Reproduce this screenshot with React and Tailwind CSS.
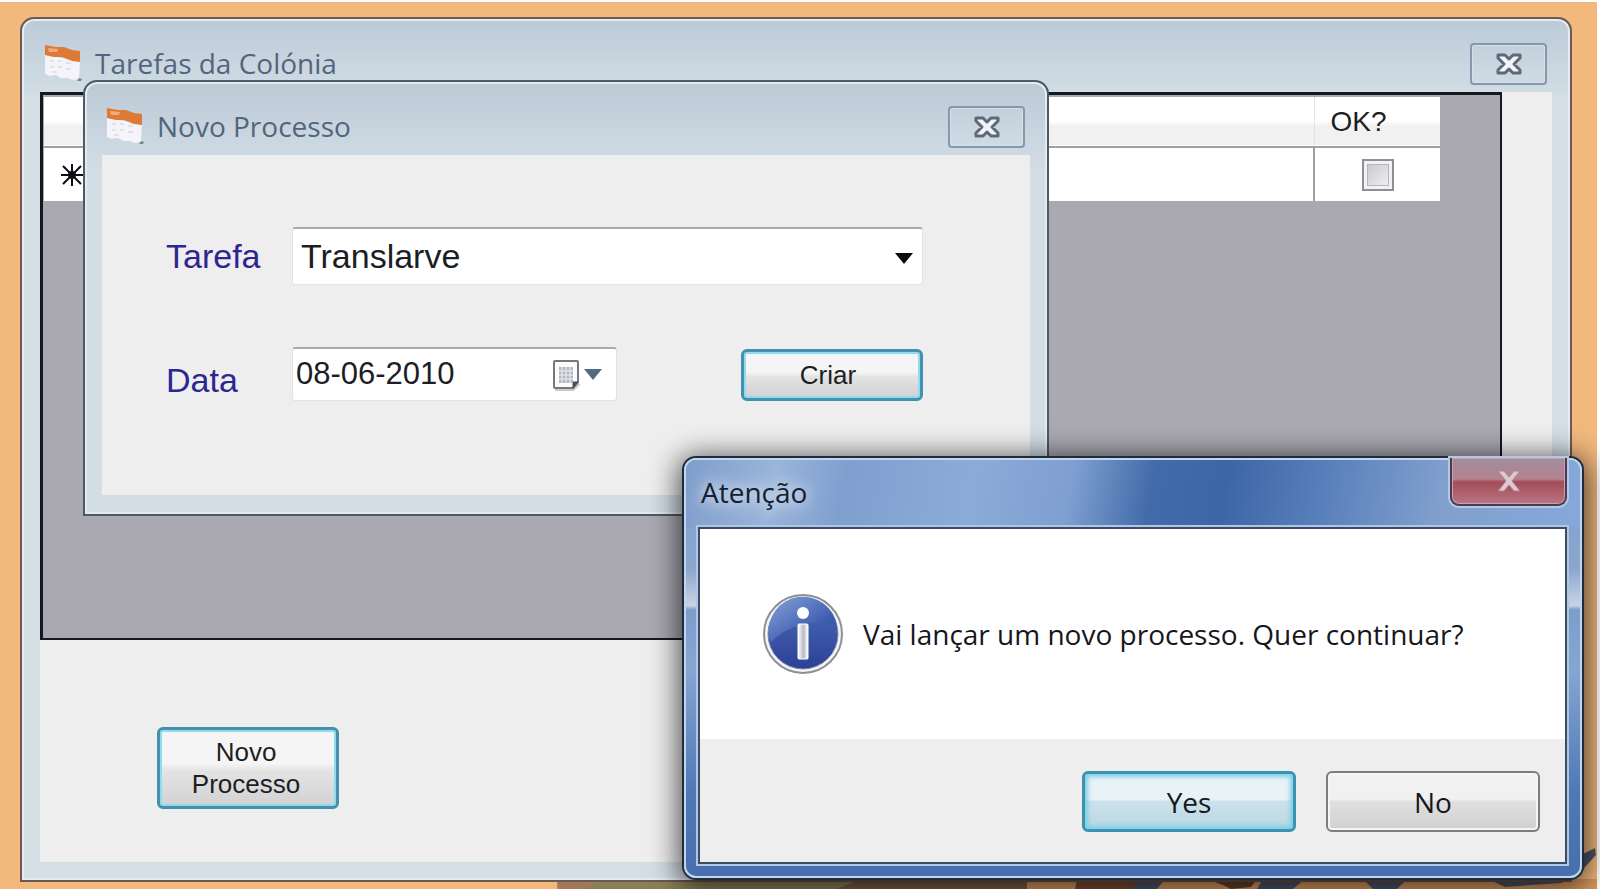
import { useState } from 'react'

function AppIcon() {
  return (
    <svg viewBox="0 0 38 38" className="size-[38px] shrink-0" aria-hidden="true">
      <path d="M1 11 L36 17 L35 35 L29 36 L24 34 L17 34 L12 31 L6 32 L1 30 Z" fill="#f4f4f9" />
      <path d="M1 1 L12 3 L20 3 L28 6 L36 7 L36 18 L28 17 L18 13 L10 13 L1 11 Z" fill="#dd7a35" />
      <path d="M4 4 L14 5 L13 8 L5 8 Z" fill="#f0ab78" />
      <path d="M6 17h4M14 17h4M22 19h5M6 23h4M14 23h4M22 25h5M8 28h5" stroke="#e0e1ea" strokeWidth="2" />
      <path d="M35 34l3 1-1 2h-4z" fill="#7d8794" />
    </svg>
  )
}

function CloseGlyph() {
  return (
    <svg viewBox="0 0 26 22" className="h-[22px] w-[26px]" aria-hidden="true">
      <path
        d="M2 2H9L13 6L17 2H24V5L18 11L24 17V20H17L13 16L9 20H2V17L8 11L2 5Z"
        fill="#f1f3f6"
        stroke="#5b697b"
        strokeWidth="3"
        strokeLinejoin="round"
      />
    </svg>
  )
}

function TitleBar({ title }) {
  return (
    <header className="flex h-[73px] items-start justify-between">
      <div className="flex items-center gap-[13px] pt-6 pl-1">
        <AppIcon />
        <h2 className="text-[28px] leading-[40px] text-[#53657c]">{title}</h2>
      </div>
      <button
        type="button"
        aria-label="Fechar"
        className="mt-6 mr-[5px] flex h-[42px] w-[77px] items-center justify-center rounded-[4px] border-2 border-[#8499ad] bg-linear-to-b from-[#c3d0db] to-[#cfdbe4] shadow-[inset_0_0_0_1px_#d5e0e9]"
      >
        <CloseGlyph />
      </button>
    </header>
  )
}

function Grid() {
  return (
    <div className="min-h-[548px] border-2 border-t-3 border-l-3 border-[#14181f] bg-[#aaa9b2] pt-[2px] pr-[60px] pl-[1px]">
      <table className="w-full border-collapse font-['Liberation_Sans',sans-serif] text-[28px] text-[#1c1e24]">
        <thead>
          <tr className="h-[50px] border-b-2 border-[#a0a0a4] bg-linear-to-b from-white from-50% to-[#f1f1f2] to-60%">
            <th className="w-[84px]" />
            <th />
            <th className="w-[126px] border-l border-[#e3e3e6] px-4 text-left font-normal">OK?</th>
          </tr>
        </thead>
        <tbody>
          <tr className="h-[54px] bg-white">
            <td className="pl-4">
              <svg viewBox="0 0 24 24" className="size-6" role="img" aria-label="Nova linha">
                <path
                  d="M12 1v22M1 12h22M3 3l4 4M17 17l4 4M21 3l-4 4M7 17l-4 4M7 7l10 10M17 7l-10 10"
                  stroke="#0d0f14"
                  strokeWidth="2"
                />
                <circle cx="12" cy="12" r="4" fill="#0d0f14" />
              </svg>
            </td>
            <td />
            <td className="border-l-2 border-[#a0a0a4] text-center">
              <input
                type="checkbox"
                aria-label="OK?"
                className="mx-auto block size-8 appearance-none border-2 border-[#8f9094] bg-linear-to-br from-[#c2c4ca] to-[#f5f5f7] shadow-[inset_0_0_0_3px_#f2f2f3,inset_0_0_0_4px_#b4b6bb]"
              />
            </td>
          </tr>
        </tbody>
      </table>
    </div>
  )
}

const focused =
  'rounded-[6px] border-3 border-[#4590ad] shadow-[inset_0_0_0_2px_#8fdcee] font-["Liberation_Sans",sans-serif] text-[26px] leading-8 text-[#1c1e24] bg-linear-to-b from-[#f5f5f5] from-44% via-[#e3e3e3] via-54% to-[#d2d2d2]'

function NovoProcesso() {
  const [tarefa, setTarefa] = useState('Translarve')
  const [data, setData] = useState('08-06-2010')

  return (
    <section className="absolute top-[80px] left-[83px] w-[966px] rounded-t-[14px] border-2 border-[#4d5a67] bg-linear-to-b from-[#bccad6] to-[#d2dde6] to-[90px] px-[17px] pb-[19px] shadow-[inset_0_0_0_2px_#e3eaf0]">
      <TitleBar title="Novo Processo" />
      <form className="flex h-[340px] flex-col gap-[62px] bg-[#eeeeee] pt-[72px] pr-[107px] pl-[64px] font-['Liberation_Sans',sans-serif] text-[34px]">
        <div className="flex items-center">
          <label htmlFor="tarefa" className="w-[126px] text-[#2d2590]">Tarefa</label>
          <div className="relative flex-1">
            <select
              id="tarefa"
              value={tarefa}
              onChange={(e) => setTarefa(e.target.value)}
              className="block h-[58px] w-full appearance-none rounded-[3px] border border-t-2 border-[#e2e2e3] border-t-[#a9aaad] bg-white pl-2 text-[#1c1e24]"
            >
              <option>Translarve</option>
            </select>
            <svg viewBox="0 0 18 11" className="pointer-events-none absolute top-[26px] right-[10px] h-[11px] w-[18px]" aria-hidden="true">
              <path d="M0 0h18l-9 11z" fill="#0c0c0e" />
            </svg>
          </div>
        </div>
        <div className="flex items-start">
          <label htmlFor="data" className="w-[126px] pt-2 text-[#2d2590]">Data</label>
          <div className="flex h-[54px] w-[325px] items-center rounded-[3px] border border-t-2 border-[#e2e2e3] border-t-[#a9aaad] bg-white pr-[14px]">
            <input
              id="data"
              value={data}
              onChange={(e) => setData(e.target.value)}
              className="w-full min-w-0 flex-1 bg-transparent py-1 pl-[3px] text-[31px] text-[#1c1e24] outline-none"
            />
            <button type="button" aria-label="Escolher data" className="flex items-center gap-1">
              <svg viewBox="0 0 28 32" className="h-8 w-7">
                <path d="M3 30h18l6-6" stroke="#c9c9cb" strokeWidth="4" fill="none" />
                <path d="M3 2h22q1 0 1 1v20l-5 6H3q-1 0-1-1V3q0-1 1-1z" fill="#fbfbfb" stroke="#77787c" strokeWidth="2" />
                <path d="M26 23h-5v6z" fill="#4c4d52" stroke="#4c4d52" />
                <path d="M7 8h14v16H7z" fill="#b3b8c2" />
                <path d="M7 12h14M7 16h14M7 20h14M10 8v16M14 8v16M18 8v16" stroke="#eef0f3" />
              </svg>
              <svg viewBox="0 0 18 11" className="h-[11px] w-[18px]">
                <path d="M0 0h18l-9 11z" fill="#526b82" />
              </svg>
            </button>
          </div>
          <button type="button" className={`mt-[2px] ml-auto h-[52px] w-[182px] pr-2 ${focused}`}>Criar</button>
        </div>
      </form>
    </section>
  )
}

function InfoIcon() {
  return (
    <svg viewBox="0 0 80 80" className="size-20 shrink-0" role="img" aria-label="Informação">
      <defs>
        <linearGradient id="ball" x1="0" y1="0" x2="0" y2="1">
          <stop offset="0" stopColor="#4a6cb8" />
          <stop offset="1" stopColor="#2c4096" />
        </linearGradient>
        <linearGradient id="gloss" x1="0" y1="0" x2="1" y2="1">
          <stop offset="0" stopColor="#86a3da" />
          <stop offset="0.7" stopColor="#3c5bad" />
        </linearGradient>
        <linearGradient id="stem" x1="0" y1="0" x2="1" y2="0">
          <stop offset="0" stopColor="#ffffff" />
          <stop offset="0.55" stopColor="#b9bcc6" />
          <stop offset="1" stopColor="#ffffff" />
        </linearGradient>
      </defs>
      <circle cx="40" cy="40" r="39" fill="#f4f4f6" stroke="#8e8f95" strokeWidth="2" />
      <circle cx="40" cy="40" r="35" fill="url(#ball)" stroke="#7d88ad" />
      <path d="M6 42A34 34 0 0 1 74 32Q60 26 42 30Q22 34 8 48Z" fill="url(#gloss)" />
      <circle cx="40" cy="19" r="6" fill="#fff" />
      <rect x="35" y="30" width="10" height="35" rx="1" fill="url(#stem)" stroke="#fff" />
    </svg>
  )
}

function Atencao() {
  return (
    <section
      role="alertdialog"
      aria-labelledby="atencao"
      className="absolute top-[456px] left-[682px] w-[902px] rounded-[14px] border-2 border-[#1f2c3d] bg-[#7f9dcb] shadow-[0_4px_28px_4px_rgba(0,0,0,0.65)]"
    >
      <div className="rounded-[12px] border-2 border-[#c3d5ec] bg-[linear-gradient(to_bottom,#86a5ce_18%,#8aa6cd_26%,#c9d3e4_35%,#7c9cca_36%,#86a6d2_50%,#4f78b6_80%,#476fae_100%)] pr-[13px] pb-[12px] pl-[12px]">
        <header className="-mr-[13px] -ml-[12px] flex h-[67px] items-start justify-between rounded-t-[10px] bg-[linear-gradient(100deg,#7f9dcb_0%,#9ab5da_10%,#7f9fcf_18%,#8bacd8_32%,#7e9fd0_43%,#426ba9_52%,#3d66a5_60%,#5c82bd_72%,#809fcd_84%,#86a8da_100%)] pr-[13px] pl-[15px]">
          <h2 id="atencao" className="pt-[13px] text-[28px] leading-[38px] text-[#16202f] [text-shadow:0_0_12px_#dfe9f4,0_0_20px_#dfe9f4]">
            Atenção
          </h2>
          <button
            type="button"
            aria-label="Fechar"
            className="-mt-[2px] flex h-[48px] w-[117px] items-center justify-center rounded-b-[9px] border-2 border-t-0 border-[#4a3a52] bg-[linear-gradient(to_bottom,#a08e9e_0%,#b58290_46%,#a34c57_52%,#b97584_100%)] shadow-[0_0_0_2px_#b3c8e4,inset_0_0_0_1px_#cba0ac]"
          >
            <svg viewBox="0 0 24 22" className="h-[22px] w-6" aria-hidden="true">
              <path d="M1 1h6l5 6 5-6h6l-8 10 8 10h-6l-5-6-5 6H1l8-10z" fill="#dfc9d0" stroke="#a8828e" />
            </svg>
          </button>
        </header>
        <div className="border-2 border-[#3c4c66] bg-[#eeeeee] shadow-[0_0_0_2px_#b0c6e5]">
          <div className="flex h-[210px] items-center gap-5 bg-white pl-[63px]">
            <InfoIcon />
            <p className="text-[28px] text-[#16161c]">Vai lançar um novo processo. Quer continuar?</p>
          </div>
          <div className="flex justify-end gap-[30px] pt-8 pr-[25px] pb-[30px]">
            <button
              type="button"
              className="h-[61px] w-[214px] rounded-[6px] border-3 border-[#3c93b1] bg-linear-to-b from-[#e9f2f7] from-46% via-[#cbe2ec] via-50% to-[#b9d7e3] text-[28px] text-[#16161c] shadow-[inset_0_0_4px_3px_#7ed0e6]"
            >
              Yes
            </button>
            <button
              type="button"
              className="h-[61px] w-[214px] rounded-[6px] border-2 border-[#7c7d80] bg-linear-to-b from-[#f1f1f1] from-46% via-[#e0e0e0] via-50% to-[#d0d0d0] text-[28px] text-[#16161c] shadow-[inset_0_0_0_2px_#f5f5f5]"
            >
              No
            </button>
          </div>
        </div>
      </div>
    </section>
  )
}

// Strip of the wallpaper drawing that shows under the windows
function Wallpaper() {
  return (
    <svg viewBox="0 0 1040 60" className="absolute right-[3px] bottom-0 h-[60px] w-[1040px]" aria-hidden="true">
      <path d="M0 52H520V60H0z" fill="#a88a68" />
      <path d="M0 52H40V60H2z" fill="#a3785a" />
      <path d="M40 52H300V60H30z" fill="#8b8055" />
      <path d="M300 52H520V60H280z" fill="#7d5b42" />
      <path d="M470 50H1040V60H470z" fill="#d9985c" />
      <path d="M520 50h60l8 10h-70z" fill="#7c4a30" />
      <path d="M580 50h28l-8 10h-24zM706 50h42l-12 10h-36zM806 50h44l-10 10h-24z" fill="#4c5568" />
      <path d="M650 50h50l-6 8-20 2-8-4z" fill="#684028" />
      <path d="M935 52l30-2 45-3 12-20 16-8 1 7-11 12-4 8-20 8-30 2-26 2z" fill="#4c5568" />
    </svg>
  )
}

export default function App() {
  return (
    <div className="min-h-screen bg-white pt-[2px] pr-[3px] font-['Open_Sans',sans-serif]">
      <main className="flex min-h-[887px] flex-col bg-[#f2b87c] pt-[15px] pr-[25px] pb-[7px] pl-5">
        <Wallpaper />
        <section className="relative flex-1 rounded-t-[14px] border-2 border-[#6b5a52] bg-linear-to-b from-[#bccad8] to-[#d3dee5] to-[80px] px-[18px] pb-[17px] shadow-[inset_0_0_0_2px_#e4ebf0]">
          <TitleBar title="Tarefas da Colónia" />
          <div className="bg-[#eeeeee] pb-[53px]">
            <div className="pr-[50px]">
              <Grid />
            </div>
            <button type="button" className={`mt-[87px] ml-[117px] block h-[82px] w-[182px] pr-8 pl-7 ${focused}`}>
              Novo Processo
            </button>
          </div>
        </section>
        <NovoProcesso />
        <Atencao />
      </main>
    </div>
  )
}
